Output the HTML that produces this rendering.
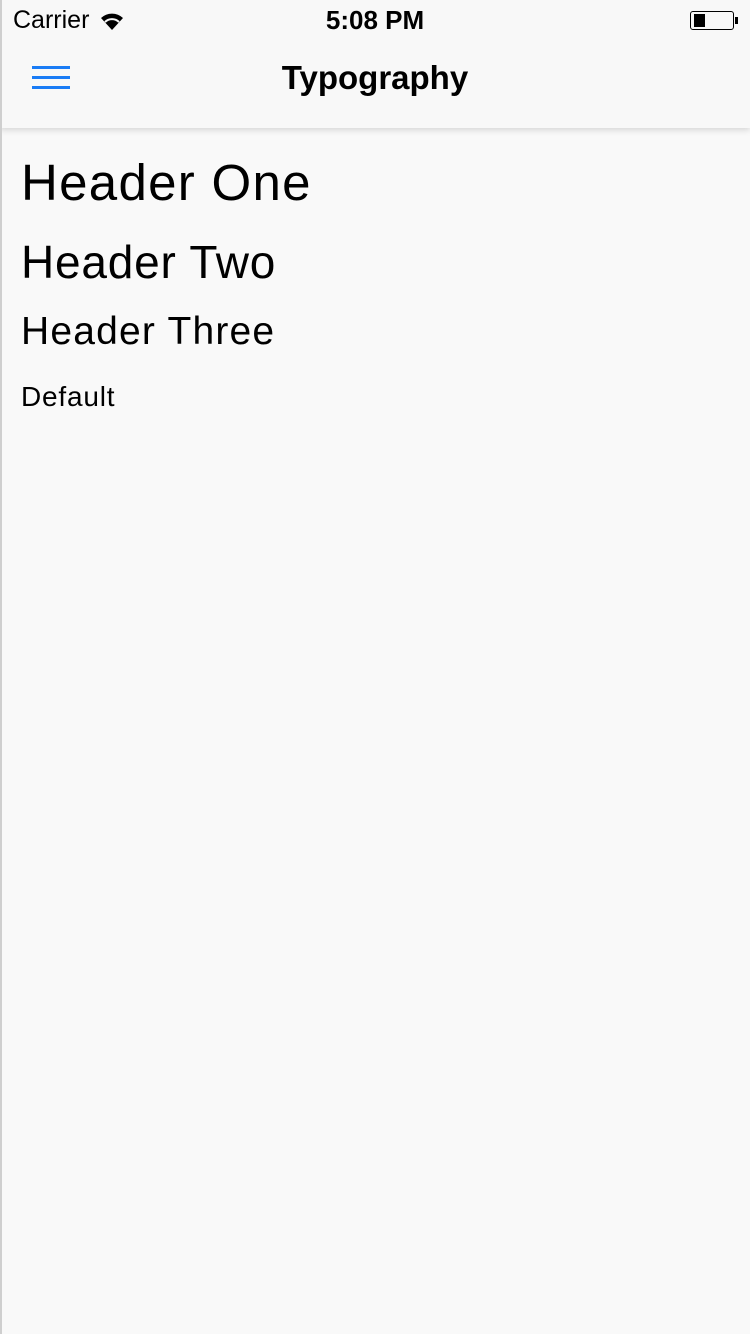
<!DOCTYPE html>
<html><head><style>
body{margin:0;width:750px;height:1334px;background:#f9f9f9;font-family:"Liberation Sans",Arial,sans-serif;position:relative;overflow:hidden;color:#000}
.lb{position:absolute;left:0;top:0;width:2px;height:1334px;background:#cfcfcf}
.nav{position:absolute;left:0;top:0;width:750px;height:128px;background:#f8f8f8;box-shadow:0 2px 6px rgba(0,0,0,0.15)}
.t{position:absolute;white-space:nowrap}
</style></head><body>
<div class="nav"></div>
<div class="lb"></div>
<div class="t" style="left:13px;top:6px;font-size:25px">Carrier</div>
<svg style="position:absolute;left:98px;top:10px" width="28" height="22" viewBox="0 0 28 22"><path d="M14 20 L3 8 A16 16 0 0 1 25 8 Z" fill="#000"/><path d="M7 12 A10 10 0 0 1 21 12" stroke="#f8f8f8" stroke-width="2" fill="none"/><path d="M3 6.5 A16 16 0 0 1 25 6.5" stroke="#f8f8f8" stroke-width="2" fill="none"/></svg>
<div class="t" style="left:0;width:750px;text-align:center;top:5px;font-size:26px;font-weight:bold">5:08 PM</div>
<div style="position:absolute;left:690px;top:11px;width:44px;height:19px;border:1.5px solid #000;border-radius:3px;box-sizing:border-box"></div>
<div style="position:absolute;left:694px;top:14px;width:11px;height:13px;background:#000"></div>
<div style="position:absolute;left:735px;top:17px;width:3px;height:7px;background:#000"></div>
<div style="position:absolute;left:32px;top:66px;width:38px;height:3px;background:#1a7cf5"></div>
<div style="position:absolute;left:32px;top:76px;width:38px;height:3px;background:#1a7cf5"></div>
<div style="position:absolute;left:32px;top:86px;width:38px;height:3px;background:#1a7cf5"></div>
<div class="t" style="left:0;width:750px;text-align:center;top:59px;font-size:33px;font-weight:bold">Typography</div>
<div class="t" style="left:21px;top:153px;font-size:51px;letter-spacing:1.3px">Header One</div>
<div class="t" style="left:21px;top:235px;font-size:46px;letter-spacing:0.8px">Header Two</div>
<div class="t" style="left:21px;top:310px;font-size:39px;letter-spacing:1.2px">Header Three</div>
<div class="t" style="left:21px;top:381px;font-size:28px;letter-spacing:0.8px">Default</div>
</body></html>
